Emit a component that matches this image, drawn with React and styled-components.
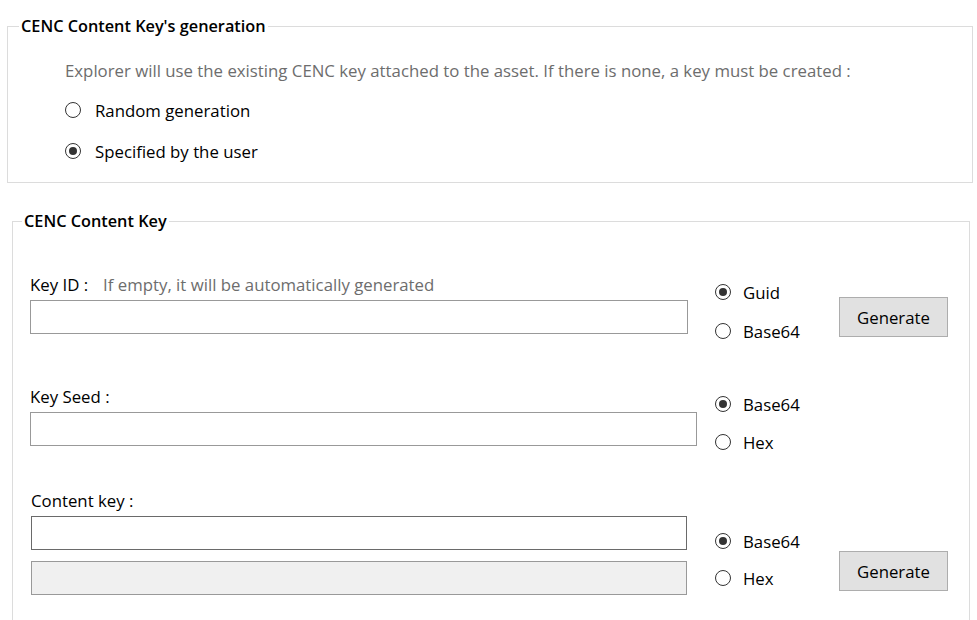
import styled, { createGlobalStyle } from 'styled-components';

const GlobalStyle = createGlobalStyle`
  body {
    margin: 0;
    background: #ffffff;
    font-family: "Open Sans", "Noto Sans", Arial, sans-serif;
    color: #000000;
  }
`;

const Page = styled.div`
  width: 977px;
  height: 620px;
  overflow: hidden;
  padding: 16px 0 0 7px;
  box-sizing: border-box;
`;

const Group = styled.fieldset`
  margin: ${props => props.$margin || '0'};
  width: ${props => props.$width}px;
  box-sizing: border-box;
  border: 1px solid #dcdcdc;
  padding: 0;
  min-width: 0;
`;

const Legend = styled.legend`
  margin-left: ${props => props.$offset || 11}px;
  padding: 0 2px;
  font-size: 16.3px;
  font-weight: 600;
  line-height: 20px;
  color: #000;
`;

const GroupBody = styled.div`
  padding: ${props => props.$padding};
`;

const Description = styled.div`
  font-size: 16.8px;
  line-height: 20px;
  color: #6d6d6d;
  margin-bottom: 19px;
  white-space: nowrap;
`;

const RadioList = styled.div`
  display: flex;
  flex-direction: column;
  gap: ${props => props.$gap}px;
  padding-top: ${props => props.$top || 0}px;
`;

const RadioItem = styled.label`
  display: flex;
  align-items: center;
  height: 20px;
  font-size: 16.8px;
  color: #000;
  white-space: nowrap;
`;

const Circle = styled.span`
  width: 16px;
  height: 16px;
  box-sizing: border-box;
  border: 1px solid #333333;
  border-radius: 50%;
  display: flex;
  align-items: center;
  justify-content: center;
  margin-right: ${props => props.$space || 12}px;
  flex-shrink: 0;

  &::after {
    content: '';
    width: 8px;
    height: 8px;
    border-radius: 50%;
    background: ${props => (props.$checked ? '#333333' : 'transparent')};
  }
`;

const Row = styled.div`
  display: grid;
  grid-template-columns: 685px 124px 109px;
  align-items: start;
  height: ${props => props.$height}px;
`;

const Fields = styled.div`
  display: flex;
  flex-direction: column;
  padding-left: ${props => props.$shift || 0}px;
`;

const Label = styled.div`
  font-size: 16.8px;
  line-height: 20px;
  margin-bottom: 5px;
  color: #000;
  white-space: nowrap;
`;

const Hint = styled.span`
  color: #6d6d6d;
  margin-left: 15px;
`;

const TextInput = styled.input`
  width: ${props => props.$width}px;
  height: 34px;
  box-sizing: border-box;
  margin: 0 0 ${props => props.$after || 0}px 0;
  border: 1px solid ${props => (props.$dark ? '#6a6a6a' : '#999999')};
  background: ${props => (props.disabled ? '#f0f0f0' : '#ffffff')};
  font-family: inherit;
  font-size: 16px;
  padding: 0 4px;
  outline: none;
`;

const Button = styled.button`
  margin-top: ${props => props.$top}px;
  width: 109px;
  height: 40px;
  box-sizing: border-box;
  background: #e1e1e1;
  border: 1px solid #adadad;
  font-family: inherit;
  font-size: 16.8px;
  color: #000;
  padding: 0;
`;

const Radio = ({ label, checked, space }) => (
  <RadioItem>
    <Circle $checked={checked} $space={space} />
    {label}
  </RadioItem>
);

export default function App() {
  return (
    <>
      <GlobalStyle />
      <Page>
        <Group $width={966}>
          <Legend>CENC Content Key's generation</Legend>
          <GroupBody $padding="25px 0 21px 57px">
            <Description>
              Explorer will use the existing CENC key attached to the asset. If there is none, a key must be created :
            </Description>
            <RadioList $gap={21}>
              <Radio label="Random generation" space={14} />
              <Radio label="Specified by the user" checked space={14} />
            </RadioList>
          </GroupBody>
        </Group>

        <Group $width={958} $margin="28px 0 0 5px">
          <Legend $offset={9}>CENC Content Key</Legend>
          <GroupBody $padding="44px 0 0 17px">
            <Row $height={112}>
              <Fields>
                <Label>
                  Key ID :<Hint>If empty, it will be automatically generated</Hint>
                </Label>
                <TextInput $width={658} />
              </Fields>
              <RadioList $top={7} $gap={19}>
                <Radio label="Guid" checked />
                <Radio label="Base64" />
              </RadioList>
              <Button $top={22}>Generate</Button>
            </Row>

            <Row $height={104}>
              <Fields>
                <Label>Key Seed :</Label>
                <TextInput $width={667} />
              </Fields>
              <RadioList $top={7} $gap={18}>
                <Radio label="Base64" checked />
                <Radio label="Hex" />
              </RadioList>
              <div />
            </Row>

            <Row $height={140}>
              <Fields $shift={1}>
                <Label>Content key :</Label>
                <TextInput $width={656} $dark $after={11} />
                <TextInput $width={656} disabled />
              </Fields>
              <RadioList $top={40} $gap={17}>
                <Radio label="Base64" checked />
                <Radio label="Hex" />
              </RadioList>
              <Button $top={60}>Generate</Button>
            </Row>
          </GroupBody>
        </Group>
      </Page>
    </>
  );
}
